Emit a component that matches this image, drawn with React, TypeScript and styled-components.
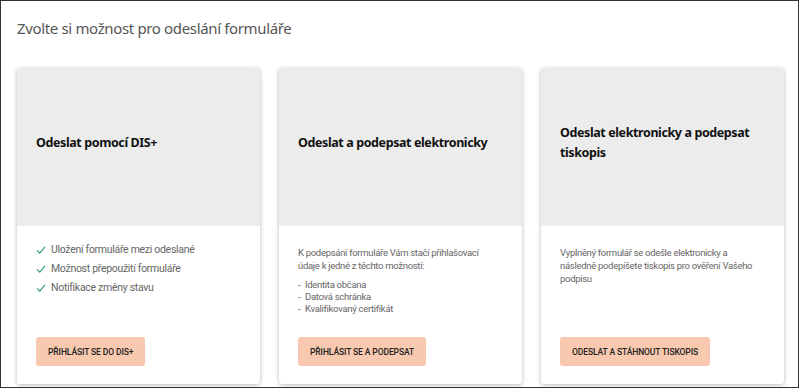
import React from "react";
import styled, { createGlobalStyle } from "styled-components";

const GlobalStyle = createGlobalStyle`
  html, body {
    margin: 0;
    padding: 0;
    background: #ffffff;
  }
  * {
    box-sizing: border-box;
  }
`;

const Frame = styled.div`
  width: 799px;
  height: 388px;
  border: 1px solid #333333;
  padding: 0 16px;
  background: #ffffff;
  display: flex;
  flex-direction: column;
`;

const PageTitle = styled.h1`
  margin: 0;
  padding: 17px 0 0 0;
  height: 67px;
  font-family: "Noto Sans", "Open Sans", sans-serif;
  font-weight: 400;
  font-size: 15px;
  line-height: 20px;
  letter-spacing: -0.35px;
  color: #555555;
`;

const Cards = styled.div`
  display: grid;
  grid-template-columns: repeat(3, 243px);
  column-gap: 19px;
`;

const Card = styled.div`
  height: 316px;
  display: flex;
  flex-direction: column;
  background: #ffffff;
  border-radius: 3px;
  box-shadow: 0 1px 4px rgba(0, 0, 0, 0.28);
  overflow: hidden;
`;

const CardHead = styled.div`
  height: 158px;
  flex: none;
  background: #ececec;
  display: flex;
  align-items: center;
  padding: 0 19px 8px 19px;
`;

const CardTitle = styled.h2`
  margin: 0;
  font-family: "Noto Sans", "Open Sans", sans-serif;
  font-weight: 700;
  font-size: 12.5px;
  line-height: 20px;
  color: #111111;
  letter-spacing: -0.4px;
`;

const CardBody = styled.div`
  flex: 1;
  display: flex;
  flex-direction: column;
  padding: 17px 26px 18px 19px;
  font-family: Roboto, "Liberation Sans", sans-serif;
  color: #666666;
`;

const CheckList = styled.ul`
  list-style: none;
  margin: 0;
  padding: 0;
  display: flex;
  flex-direction: column;
  gap: 5px;
`;

const CheckItem = styled.li`
  display: flex;
  align-items: center;
  gap: 5px;
  font-size: 10.5px;
  line-height: 14px;
  letter-spacing: -0.3px;
`;

const Tick = styled.svg`
  width: 10px;
  height: 10px;
  flex: none;
`;

const Text = styled.p`
  margin: 3px 0 7px 0;
  font-size: 9.5px;
  line-height: 13px;
  letter-spacing: -0.3px;
`;

const DashList = styled.ul`
  list-style: none;
  margin: 0;
  padding: 0;
  font-size: 9.5px;
  line-height: 12px;
  letter-spacing: -0.3px;
  li::before {
    content: "-";
    display: inline-block;
    width: 7px;
  }
`;

const Button = styled.button`
  margin-top: auto;
  align-self: flex-start;
  height: 29px;
  padding: 0 12px;
  border: none;
  border-radius: 3px;
  background: #f8c9af;
  font-family: Roboto, "Liberation Sans", sans-serif;
  font-weight: 500;
  font-size: 8.5px;
  letter-spacing: -0.1px;
  text-transform: uppercase;
  color: #222222;
  cursor: pointer;
`;

const Check = () => (
  <Tick viewBox="0 0 10 10">
    <path d="M1 5.4 L3.8 8.2 L9 1.8" fill="none" stroke="#2e9a74" strokeWidth="1.1" />
  </Tick>
);

export default function App() {
  return (
    <>
      <GlobalStyle />
      <Frame>
        <PageTitle>Zvolte si možnost pro odeslání formuláře</PageTitle>
        <Cards>
          <Card>
            <CardHead>
              <CardTitle>Odeslat pomocí DIS+</CardTitle>
            </CardHead>
            <CardBody>
              <CheckList>
                <CheckItem><Check />Uložení formuláře mezi odeslané</CheckItem>
                <CheckItem><Check />Možnost přepoužití formuláře</CheckItem>
                <CheckItem><Check />Notifikace změny stavu</CheckItem>
              </CheckList>
              <Button>Přihlásit se do DIS+</Button>
            </CardBody>
          </Card>
          <Card>
            <CardHead>
              <CardTitle>Odeslat a podepsat elektronicky</CardTitle>
            </CardHead>
            <CardBody>
              <Text>K podepsání formuláře Vám stačí přihlašovací údaje k jedné z těchto možností:</Text>
              <DashList>
                <li>Identita občana</li>
                <li>Datová schránka</li>
                <li>Kvalifikovaný certifikát</li>
              </DashList>
              <Button>Přihlásit se a podepsat</Button>
            </CardBody>
          </Card>
          <Card>
            <CardHead>
              <CardTitle>Odeslat elektronicky a podepsat tiskopis</CardTitle>
            </CardHead>
            <CardBody>
              <Text>Vyplněný formulář se odešle elektronicky a následně podepíšete tiskopis pro ověření Vašeho podpisu</Text>
              <Button>Odeslat a stáhnout tiskopis</Button>
            </CardBody>
          </Card>
        </Cards>
      </Frame>
    </>
  );
}
